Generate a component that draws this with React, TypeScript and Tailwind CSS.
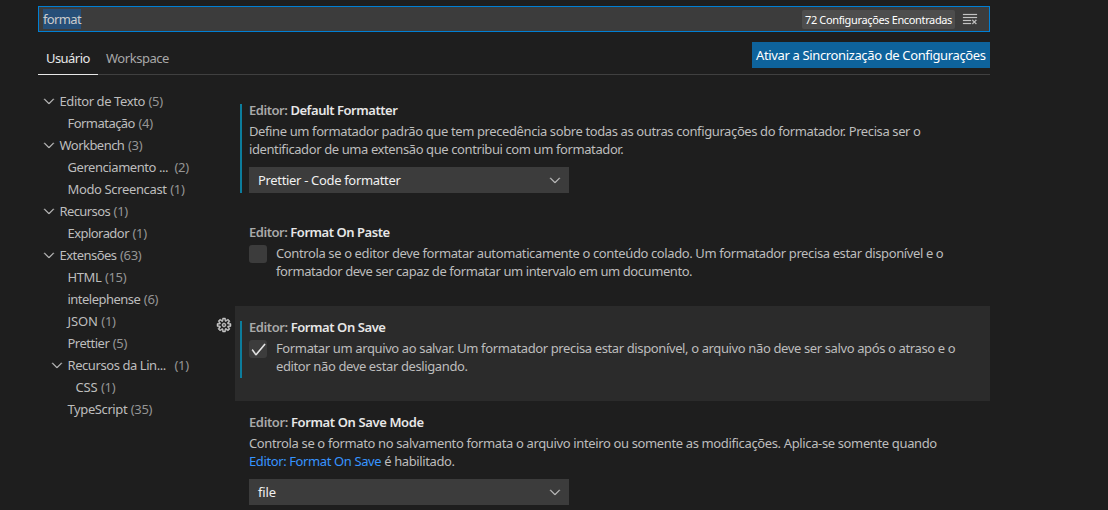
import type { ReactNode } from "react";
import { VscCheck, VscChevronDown, VscClearAll, VscGear } from "react-icons/vsc";

type TreeRow = { label: string; count: number; indent: string; track: string; open?: boolean; cut?: boolean };

const TREE: TreeRow[] = [
  { label: "Editor de Texto", count: 5, indent: "pl-[3px]", track: "tracking-[-0.4px]", open: true },
  { label: "Formatação", count: 4, indent: "pl-[11px]", track: "tracking-[-0.54px]" },
  { label: "Workbench", count: 3, indent: "pl-[3px]", track: "tracking-[-0.53px]", open: true },
  { label: "Gerenciamento ...", count: 2, indent: "pl-[11px]", track: "tracking-[-0.44px]", cut: true },
  { label: "Modo Screencast", count: 1, indent: "pl-[11px]", track: "tracking-[-0.36px]" },
  { label: "Recursos", count: 1, indent: "pl-[3px]", track: "tracking-[-0.61px]", open: true },
  { label: "Explorador", count: 1, indent: "pl-[11px]", track: "tracking-[-0.55px]" },
  { label: "Extensões", count: 63, indent: "pl-[3px]", track: "tracking-[-0.54px]", open: true },
  { label: "HTML", count: 15, indent: "pl-[11px]", track: "tracking-[-0.4px]" },
  { label: "intelephense", count: 6, indent: "pl-[11px]", track: "tracking-[-0.52px]" },
  { label: "JSON", count: 1, indent: "pl-[11px]", track: "tracking-[-0.1px]" },
  { label: "Prettier", count: 5, indent: "pl-[11px]", track: "tracking-[-0.5px]" },
  { label: "Recursos da Lin...", count: 1, indent: "pl-[11px]", track: "tracking-[-0.43px]", open: true, cut: true },
  { label: "CSS", count: 1, indent: "pl-[19px]", track: "tracking-[-0.2px]" },
  { label: "TypeScript", count: 35, indent: "pl-[11px]", track: "tracking-[-0.4px]" },
];

function Tree() {
  return (
    <nav className="w-[164px] shrink-0 pt-[15px]">
      {TREE.map((row) => (
        <div key={row.label} className={`flex h-[22px] items-center leading-[22px] whitespace-nowrap ${row.indent}`}>
          <span className="flex w-[18.5px] shrink-0">
            {row.open && <VscChevronDown className="-ml-[0.5px] size-4 stroke-[0.35] text-[#c5c5c5]" />}
          </span>
          <span className={`${row.track} ${row.cut ? "w-[107px]" : "mr-[3.5px]"}`}>{row.label}</span>
          <span className="tracking-[-0.3px] text-[#959595]">({row.count})</span>
        </div>
      ))}
    </nav>
  );
}

function Line({ track, children }: { track: string; children: ReactNode }) {
  return <span className={`block whitespace-nowrap ${track}`}>{children}</span>;
}

function Select({ value, track }: { value: string; track: string }) {
  return (
    <div className="mt-[9px] flex h-[26px] w-80 items-center justify-between bg-[#3c3c3c] pr-1.5 pl-[9px] text-[#f0f0f0]">
      <span className={track}>{value}</span>
      <VscChevronDown className="size-4 stroke-[0.35] text-[#c5c5c5]" />
    </div>
  );
}

function Checkbox({ checked }: { checked?: boolean }) {
  return (
    <span className="mt-px mr-[9px] flex size-[18px] shrink-0 items-center justify-center rounded-[3px] bg-[#3c3c3c] text-[#f0f0f0]">
      {checked && <VscCheck className="size-[17px] stroke-[0.5]" />}
    </span>
  );
}

type SettingProps = {
  name: string;
  track: string;
  height: string;
  modified?: string;
  focused?: boolean;
  children: ReactNode;
};

function Setting({ name, track, height, modified, focused, children }: SettingProps) {
  return (
    <section className={`flex ${height}`}>
      <div className="w-[33px] shrink-0 pt-[11px] pl-[14px]">
        {focused && <VscGear className="size-4 stroke-[0.5] text-[#c5c5c5]" />}
      </div>
      <div className={`flex min-w-0 grow pl-[5px] ${focused ? "bg-[#2b2b2b]" : ""}`}>
        <div className="w-[9px] shrink-0 pt-[15px]">
          {modified && <div className={`w-0.5 bg-[#0c7d9d] ${modified}`} />}
        </div>
        <div className="pt-3">
          <h3 className={`mb-[3px] font-semibold whitespace-nowrap text-[#a9a9a9] ${track}`}>
            Editor: <span className="text-[#e7e7e7]">{name}</span>
          </h3>
          {children}
        </div>
      </div>
    </section>
  );
}

export default function App() {
  return (
    <div className="h-[510px] overflow-hidden bg-[#1e1e1e] pt-1.5 pl-[38px] font-['Noto_Sans','Open_Sans',sans-serif] text-[13px] leading-[18px] text-[#bdbdbd]">
      <div className="w-[952px]">
        <div className="flex h-[26px] items-center border border-[#007fd4] bg-[#3c3c3c] pr-[11px] pl-1">
          <span className="h-5 bg-[#264f78] leading-5 tracking-[-0.64px] text-[#cccccc]">format</span>
          <span className="ml-auto h-[19px] w-[153px] rounded-[2px] bg-[#4d4d4d] pl-[3px] text-[11px] leading-[19px] tracking-[-0.36px] whitespace-nowrap text-white">
            72 Configurações Encontradas
          </span>
          <VscClearAll className="ml-[7px] size-4 stroke-[0.2] text-[#c5c5c5]" />
        </div>

        <div className="flex h-[43px] items-end justify-between border-b border-[#404040]">
          <div className="-mb-px flex leading-[32px]">
            <span className="w-[60px] border-b border-[#e7e7e7] pl-2 tracking-[-0.56px] text-[#e7e7e7]">Usuário</span>
            <span className="pl-2 tracking-[-0.47px] text-[#a8a8a8]">Workspace</span>
          </div>
          <button className="mb-1.5 h-[26px] w-[238px] bg-[#0e639c] pl-1 text-left tracking-[-0.36px] whitespace-nowrap text-white">
            Ativar a Sincronização de Configurações
          </button>
        </div>

        <div className="flex">
          <Tree />
          <main className="min-w-0 grow pt-3.5">
            <Setting name="Default Formatter" track="tracking-[-0.45px]" height="h-[122px]" modified="h-[89px]">
              <Line track="tracking-[-0.39px]">
                Define um formatador padrão que tem precedência sobre todas as outras configurações do formatador. Precisa ser o
              </Line>
              <Line track="tracking-[-0.4px]">identificador de uma extensão que contribui com um formatador.</Line>
              <Select value="Prettier - Code formatter" track="tracking-[-0.33px]" />
            </Setting>

            <Setting name="Format On Paste" track="tracking-[-0.46px]" height="h-[95px]">
              <div className="flex">
                <Checkbox />
                <div>
                  <Line track="tracking-[-0.384px]">
                    Controla se o editor deve formatar automaticamente o conteúdo colado. Um formatador precisa estar disponível e o
                  </Line>
                  <Line track="tracking-[-0.42px]">formatador deve ser capaz de formatar um intervalo em um documento.</Line>
                </div>
              </div>
            </Setting>

            <Setting name="Format On Save" track="tracking-[-0.42px]" height="h-[95px]" modified="h-[57px]" focused>
              <div className="flex">
                <Checkbox checked />
                <div>
                  <Line track="tracking-[-0.375px]">
                    Formatar um arquivo ao salvar. Um formatador precisa estar disponível, o arquivo não deve ser salvo após o atraso e o
                  </Line>
                  <Line track="tracking-[-0.38px]">editor não deve estar desligando.</Line>
                </div>
              </div>
            </Setting>

            <Setting name="Format On Save Mode" track="tracking-[-0.38px]" height="h-[122px]">
              <Line track="tracking-[-0.365px]">
                Controla se o formato no salvamento formata o arquivo inteiro ou somente as modificações. Aplica-se somente quando
              </Line>
              <Line track="tracking-[-0.39px]">
                <a className="text-[#3794ff]">Editor: Format On Save</a> é habilitado.
              </Line>
              <Select value="file" track="tracking-[-0.13px]" />
            </Setting>
          </main>
        </div>
      </div>
    </div>
  );
}
